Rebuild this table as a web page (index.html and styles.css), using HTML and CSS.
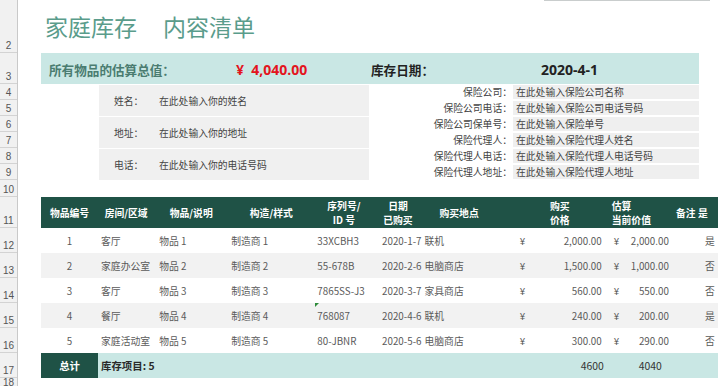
FILE: index.html
```html
<!DOCTYPE html>
<html lang="zh-CN">
<head>
<meta charset="utf-8">
<title>家庭库存 内容清单</title>
<link rel="stylesheet" href="styles.css">
</head>
<body>
<div class="sheet">
  <div class="gutter">
    <div class="rn r53">2</div>
    <div class="rn r31">3</div>
    <div class="rn r16">4</div>
    <div class="rn r16">5</div>
    <div class="rn r16">6</div>
    <div class="rn r16">7</div>
    <div class="rn r16">8</div>
    <div class="rn r16">9</div>
    <div class="rn r17">10</div>
    <div class="rn r31">11</div>
    <div class="rn r25">12</div>
    <div class="rn r25">13</div>
    <div class="rn r25">14</div>
    <div class="rn r25">15</div>
    <div class="rn r25">16</div>
    <div class="rn r25">17</div>
    <div class="rn r8">18</div>
  </div>
  <div class="main">
    <div class="title-row">
      <div class="topline"></div>
      <h1 class="title"><span>家庭库存</span><span class="title-2">内容清单</span></h1>
    </div>
    <div class="summary">
      <div class="sum-label">所有物品的估算总值：</div>
      <div class="sum-amount">¥&nbsp; 4,040.00</div>
      <div class="sum-date-label">库存日期：</div>
      <div class="sum-date">2020-4-1</div>
    </div>
    <div class="info">
      <div class="contact">
        <div class="contact-row"><span class="c-label">姓名：</span><span>在此处输入你的姓名</span></div>
        <div class="contact-row"><span class="c-label">地址：</span><span>在此处输入你的地址</span></div>
        <div class="contact-row"><span class="c-label">电话：</span><span>在此处输入你的电话号码</span></div>
      </div>
      <div class="ins">
        <div class="ins-row"><span class="i-label">保险公司：</span><span class="i-val">在此处输入保险公司名称</span></div>
        <div class="ins-row"><span class="i-label">保险公司电话：</span><span class="i-val">在此处输入保险公司电话号码</span></div>
        <div class="ins-row"><span class="i-label">保险公司保单号：</span><span class="i-val">在此处输入保险单号</span></div>
        <div class="ins-row"><span class="i-label">保险代理人：</span><span class="i-val">在此处输入保险代理人姓名</span></div>
        <div class="ins-row"><span class="i-label">保险代理人电话：</span><span class="i-val">在此处输入保险代理人电话号码</span></div>
        <div class="ins-row"><span class="i-label">保险代理人地址：</span><span class="i-val">在此处输入保险代理人地址</span></div>
      </div>
    </div>
    <div class="spacer"></div>
    <table class="inv">
      <colgroup>
        <col class="w1"><col class="w2"><col class="w3"><col class="w4"><col class="w5"><col class="w6"><col class="w7"><col class="w8"><col class="w9"><col class="w10"><col class="w11">
      </colgroup>
      <thead>
        <tr>
          <th>物品编号</th>
          <th>房间/区域</th>
          <th>物品/说明</th>
          <th>构造/样式</th>
          <th>序列号/<br>ID 号</th>
          <th>日期<br>已购买</th>
          <th class="th-place">购买地点</th>
          <th>购买<br>价格</th>
          <th class="th-est">估算<br>当前价值</th>
          <th>备注</th>
          <th class="th-ins">是</th>
        </tr>
      </thead>
      <tbody>
        <tr>
          <td class="num">1</td><td class="txt">客厅</td><td class="txt2">物品 1</td><td class="txt">制造商 1</td><td class="txt">33XCBH3</td><td class="date">2020-1-7</td><td class="place">联机</td>
          <td><div class="money m1"><span>¥</span><span>2,000.00</span></div></td>
          <td><div class="money m2"><span>¥</span><span>2,000.00</span></div></td>
          <td></td><td class="yn">是</td>
        </tr>
        <tr class="alt">
          <td class="num">2</td><td class="txt">家庭办公室</td><td class="txt2">物品 2</td><td class="txt">制造商 2</td><td class="txt">55-678B</td><td class="date">2020-2-6</td><td class="place">电脑商店</td>
          <td><div class="money m1"><span>¥</span><span>1,500.00</span></div></td>
          <td><div class="money m2"><span>¥</span><span>1,000.00</span></div></td>
          <td></td><td class="yn">否</td>
        </tr>
        <tr>
          <td class="num">3</td><td class="txt">客厅</td><td class="txt2">物品 3</td><td class="txt">制造商 3</td><td class="txt">7865SS-J3</td><td class="date">2020-3-7</td><td class="place">家具商店</td>
          <td><div class="money m1"><span>¥</span><span>560.00</span></div></td>
          <td><div class="money m2"><span>¥</span><span>550.00</span></div></td>
          <td></td><td class="yn">否</td>
        </tr>
        <tr class="alt">
          <td class="num">4</td><td class="txt">餐厅</td><td class="txt2">物品 4</td><td class="txt">制造商 4</td><td class="txt warn">768087</td><td class="date">2020-4-6</td><td class="place">联机</td>
          <td><div class="money m1"><span>¥</span><span>240.00</span></div></td>
          <td><div class="money m2"><span>¥</span><span>200.00</span></div></td>
          <td></td><td class="yn">是</td>
        </tr>
        <tr>
          <td class="num">5</td><td class="txt">家庭活动室</td><td class="txt2">物品 5</td><td class="txt">制造商 5</td><td class="txt">80-JBNR</td><td class="date">2020-5-6</td><td class="place">电脑商店</td>
          <td><div class="money m1"><span>¥</span><span>300.00</span></div></td>
          <td><div class="money m2"><span>¥</span><span>290.00</span></div></td>
          <td></td><td class="yn">否</td>
        </tr>
      </tbody>
      <tfoot>
        <tr>
          <td class="total-label">总计</td>
          <td class="total-count" colspan="6">库存项目: 5</td>
          <td class="total-n1">4600</td>
          <td class="total-n2">4040</td>
          <td></td><td></td>
        </tr>
      </tfoot>
    </table>
  </div>
</div>
</body>
</html>
```

FILE: styles.css
```css
* { box-sizing: border-box; }
html, body { margin: 0; padding: 0; }
body {
  width: 718px;
  height: 386px;
  overflow: hidden;
  background: #fff;
  font-family: "Noto Sans CJK SC", "Noto Sans", sans-serif;
  color: #333;
}
.sheet { display: flex; width: 718px; height: 386px; overflow: hidden; }

/* row number gutter */
.gutter {
  flex: 0 0 18px;
  background: #f1f1f1;
  border-right: 1px solid #c9c9c9;
  display: flex;
  flex-direction: column;
}
.rn {
  flex: 0 0 auto;
  border-bottom: 1px solid #d3d3d3;
  font-family: "Liberation Sans", sans-serif;
  font-size: 10px;
  color: #555;
  text-align: center;
  display: flex;
  align-items: flex-end;
  justify-content: center;
  line-height: 11px;
  padding-bottom: 1px;
  overflow: hidden;
}
.r53 { height: 53px; }
.r31 { height: 31px; }
.r16 { height: 16px; }
.r17 { height: 17px; }
.r25 { height: 25px; }
.r8 { height: 8px; align-items: flex-start; padding-bottom: 0; line-height: 10px; border-bottom: 0; }

.main { flex: 1 1 auto; min-width: 0; overflow: hidden; }

/* title */
.title-row { height: 53px; display: flex; flex-direction: column; }
.topline { margin-left: 526px; width: 166px; height: 1px; background: #c9cdcd; }
.title {
  margin: 10px 0 0 27px;
  font-size: 23px;
  line-height: 30px;
  font-weight: 400;
  color: #5a9c8b;
  letter-spacing: 0;
}
.title-2 { margin-left: 26px; }

/* summary bar */
.summary {
  margin-left: 23px;
  width: 658px;
  height: 31px;
  background: #c9e7e4;
  display: grid;
  grid-template-columns: 187px 135px 170px 1fr;
  align-items: center;
  padding-left: 8px;
  padding-top: 1px;
  font-weight: 700;
}
.sum-label { font-size: 12.6px; color: #4a7c70; }
.sum-amount { font-size: 14px; color: #e3141d; font-family: "Open Sans", "Noto Sans CJK SC", sans-serif; }
.sum-date-label { font-size: 12.6px; color: #222; }
.sum-date { font-size: 14px; color: #222; font-family: "Open Sans", "Noto Sans CJK SC", sans-serif; }

/* info block */
.info { height: 96px; display: flex; font-size: 9.8px; color: #444; }
.contact {
  margin-left: 81px;
  width: 270px;
  padding-top: 1px;
  display: flex;
  flex-direction: column;
  gap: 1px;
}
.contact-row {
  height: 31px;
  background: #f0f0f0;
  display: flex;
  align-items: center;
  padding-left: 15px;
}
.c-label { width: 45px; }
.ins { display: flex; flex-direction: column; }
.ins-row { height: 16px; display: flex; }
.i-label { width: 144px; text-align: right; line-height: 16px; padding-right: 1px; }
.i-val {
  width: 186px;
  margin: 1px 0;
  height: 14px;
  line-height: 14px;
  background: #efefef;
  padding-left: 3px;
}
.spacer { height: 17px; }

/* inventory table */
.inv {
  margin-left: 23px;
  border-collapse: collapse;
  table-layout: fixed;
  width: 697px;
  font-size: 9.8px;
}
.w1 { width: 57px; }
.w2 { width: 56px; }
.w3 { width: 74px; }
.w4 { width: 86px; }
.w5 { width: 59px; }
.w6 { width: 49px; }
.w7 { width: 89px; }
.w8 { width: 96px; }
.w9 { width: 66px; }
.w10 { width: 24px; }
.w11 { width: 40px; }

.inv th {
  background: #1f5246;
  color: #fff;
  font-weight: 700;
  height: 31px;
  line-height: 14px;
  padding: 0;
  text-align: center;
  white-space: nowrap;
  overflow: hidden;
}
.inv th.th-place { text-align: left; padding-left: 17px; }
.inv th.th-est { text-align: left; padding-left: 4px; }
.inv th.th-ins { text-align: left; padding-left: 0; }

.inv td {
  height: 25px;
  padding: 0;
  color: #5a5a5a;
  white-space: nowrap;
  overflow: hidden;
  font-family: "Noto Sans CJK SC", sans-serif;
}
.inv tbody tr.alt td { background: #f2f2f2; }
.inv td.num { text-align: center; }
.inv td.txt { padding-left: 3px; }
.inv td.txt2 { padding-left: 5px; }
.inv td.date { text-align: right; padding-right: 1px; }
.inv td.place { padding-left: 2px; }
.inv td.yn { padding-left: 7px; }
.inv td.warn { position: relative; }
.inv td.warn::before {
  content: "";
  position: absolute;
  left: 1px;
  top: 0;
  border-top: 4px solid #2e8b3a;
  border-right: 4px solid transparent;
}
.money { display: flex; justify-content: space-between; }
.money.m1 { padding: 0 6px 0 8px; }
.money.m2 { padding: 0 5px 0 6px; }

.inv tfoot td {
  height: 25px;
  background: #c9e7e4;
  color: #333;
}
.inv tfoot td.total-label {
  background: #1f5246;
  color: #fff;
  text-align: center;
  font-weight: 700;
  font-size: 10.4px;
}
.inv tfoot td.total-count { padding-left: 3px; font-weight: 700; font-size: 10.4px; color: #2a2a2a; }
.inv tfoot td.total-n1 { text-align: right; padding-right: 4px; font-size: 10.4px; }
.inv tfoot td.total-n2 { text-align: right; padding-right: 12px; font-size: 10.4px; }
```
